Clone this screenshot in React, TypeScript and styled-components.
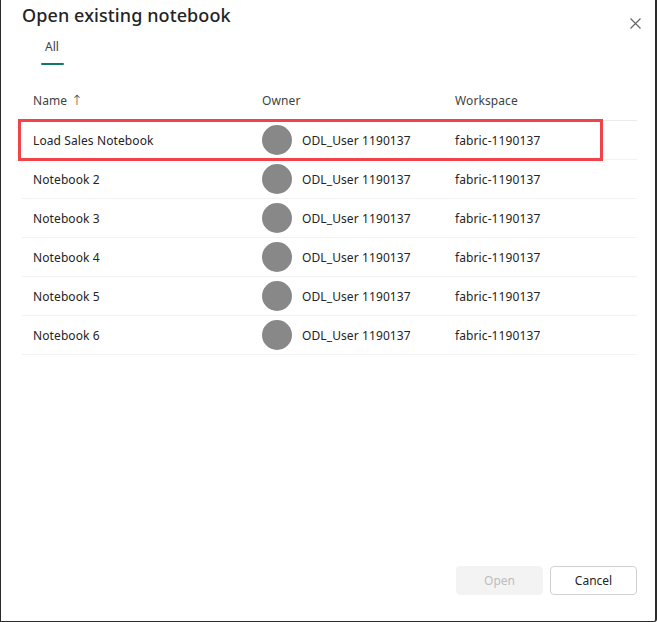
import React from "react";
import styled, { createGlobalStyle } from "styled-components";

const Global = createGlobalStyle`
  html, body { margin: 0; padding: 0; background: #ffffff; }
  body { font-family: "Noto Sans", "Open Sans", sans-serif; color: #242424; }
  * { box-sizing: border-box; }
`;

const Dialog = styled.div`
  width: 657px;
  height: 622px;
  display: flex;
  flex-direction: column;
  background: #fff;
  border-left: 1px solid #2b2b2b;
  border-right: 2px solid #2b2b2b;
  border-bottom: 1px solid #2b2b2b;
  border-bottom-right-radius: 3px;
`;

const Header = styled.div`
  display: flex;
  justify-content: space-between;
  align-items: flex-start;
  padding: 3px 13px 0 21px;
`;

const Title = styled.h1`
  margin: 0;
  font-size: 18px;
  line-height: 24px;
  font-weight: 500;
  color: #242424;
  letter-spacing: 0.1px;
`;

const CloseButton = styled.button`
  border: 0;
  background: transparent;
  padding: 0;
  margin-top: 13px;
  width: 14px;
  height: 14px;
  display: flex;
  align-items: center;
  justify-content: center;
  color: #616161;
  cursor: pointer;
`;

const Tabs = styled.div`
  display: flex;
  padding: 8px 0 0 40px;
`;

const Tab = styled.div<{ $active?: boolean }>`
  position: relative;
  padding: 0 4px 10px;
  font-size: 12px;
  line-height: 17px;
  color: #424242;
  &::after {
    content: "";
    position: absolute;
    left: 0;
    right: -1px;
    bottom: 0;
    height: 2px;
    border-radius: 1px;
    background: ${(p) => (p.$active ? "#117865" : "transparent")};
  }
`;

const Table = styled.div`
  margin: 15px 18px 0 21px;
`;

const Row = styled.div<{ $header?: boolean }>`
  position: relative;
  display: grid;
  grid-template-columns: 229px 193px 1fr;
  align-items: center;
  height: ${(p) => (p.$header ? "41px" : "39px")};
  padding-left: 11px;
  border-bottom: 1px solid ${(p) => (p.$header ? "#ebebeb" : "#f2f2f2")};
  font-size: 12px;
  color: ${(p) => (p.$header ? "#424242" : "#242424")};
`;

const Cell = styled.div`
  display: flex;
  align-items: center;
  white-space: nowrap;
  letter-spacing: 0.1px;
`;

const Arrow = styled.span`
  margin-left: 4px;
  font-size: 14px;
  line-height: 14px;
  font-family: "DejaVu Sans", sans-serif;
  font-weight: 300;
`;

const Avatar = styled.span`
  width: 30px;
  height: 30px;
  border-radius: 50%;
  background: #888888;
  margin-right: 10px;
  flex-shrink: 0;
`;

const Highlight = styled.div`
  position: absolute;
  left: -4px;
  top: -2px;
  width: 585px;
  height: 42px;
  border: 3px solid #f0444a;
  pointer-events: none;
`;

const Spacer = styled.div`
  flex: 1;
`;

const Footer = styled.div`
  display: flex;
  justify-content: flex-end;
  gap: 7px;
  padding: 0 18px 26px 0;
`;

const Button = styled.button<{ $disabled?: boolean }>`
  width: 87px;
  height: 29px;
  border-radius: 4px;
  font-family: "Noto Sans", "Open Sans", sans-serif;
  font-size: 12px;
  cursor: pointer;
  background: ${(p) => (p.$disabled ? "#f3f3f3" : "#ffffff")};
  color: ${(p) => (p.$disabled ? "#bdbdbd" : "#242424")};
  border: 1px solid ${(p) => (p.$disabled ? "#f3f3f3" : "#d1d1d1")};
`;

const rows = [
  "Load Sales Notebook",
  "Notebook 2",
  "Notebook 3",
  "Notebook 4",
  "Notebook 5",
  "Notebook 6",
];

export default function App() {
  return (
    <>
      <Global />
      <Dialog>
        <Header>
          <Title>Open existing notebook</Title>
          <CloseButton aria-label="Close">
            <svg width="11" height="11" viewBox="0 0 11 11">
              <path d="M0.5 0.5 L10.5 10.5 M10.5 0.5 L0.5 10.5" stroke="currentColor" strokeWidth="1.1" fill="none" />
            </svg>
          </CloseButton>
        </Header>
        <Tabs>
          <Tab $active>All</Tab>
        </Tabs>
        <Table>
          <Row $header>
            <Cell>
              Name<Arrow>↑</Arrow>
            </Cell>
            <Cell>Owner</Cell>
            <Cell>Workspace</Cell>
          </Row>
          {rows.map((name, i) => (
            <Row key={name}>
              {i === 0 && <Highlight />}
              <Cell>{name}</Cell>
              <Cell>
                <Avatar />
                ODL_User 1190137
              </Cell>
              <Cell>fabric-1190137</Cell>
            </Row>
          ))}
        </Table>
        <Spacer />
        <Footer>
          <Button $disabled disabled>Open</Button>
          <Button>Cancel</Button>
        </Footer>
      </Dialog>
    </>
  );
}
